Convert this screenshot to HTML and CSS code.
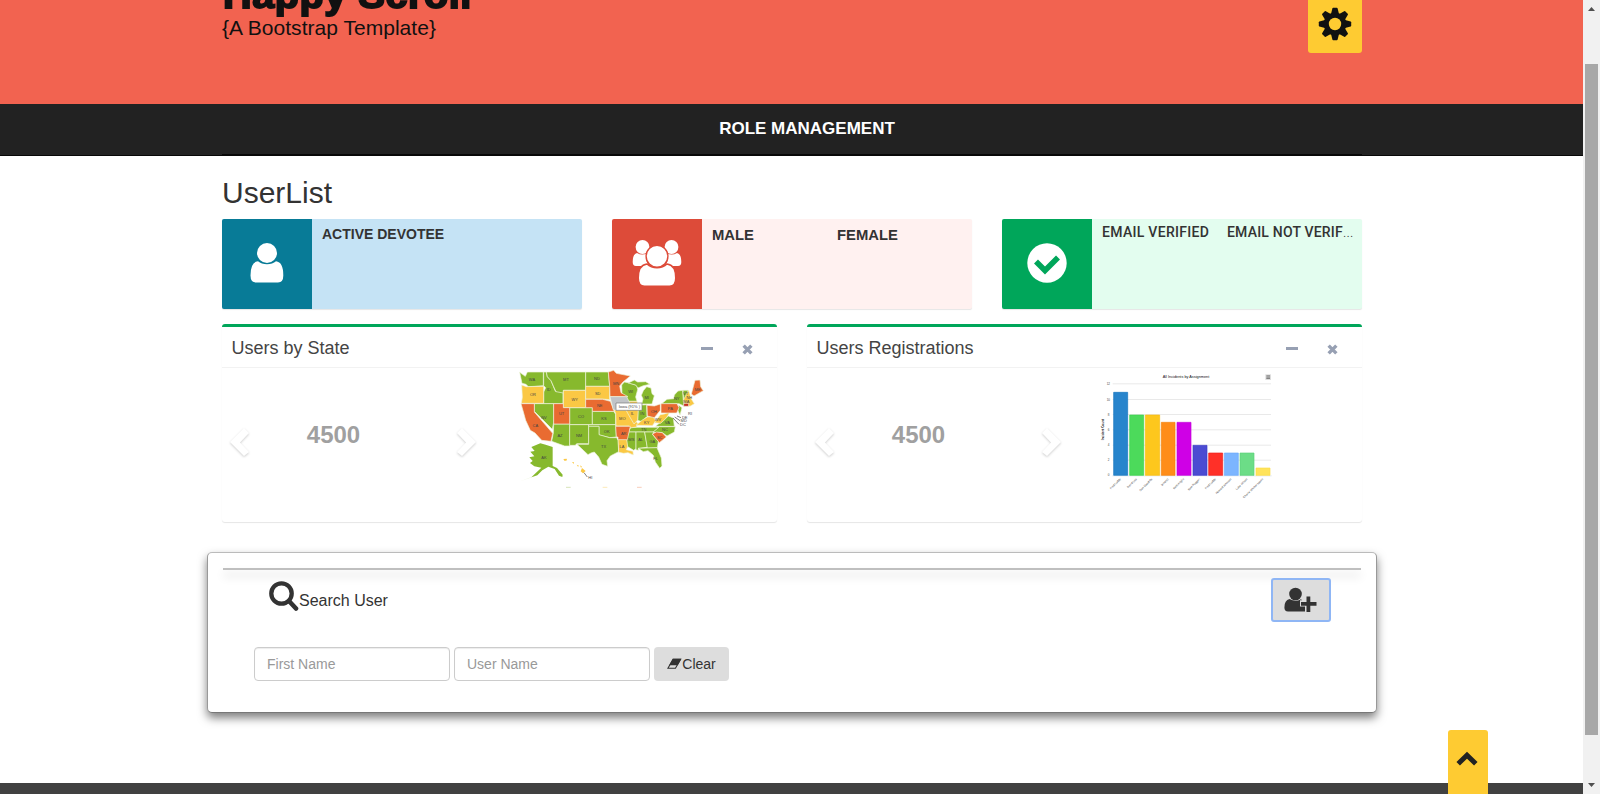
FILE: index.html
```
<!DOCTYPE html>
<html lang="en">
<head>
<meta charset="utf-8">
<title>Happy Scroll</title>
<link rel="stylesheet" href="styles.css">
</head>
<body>
<div class="page">
  <header class="masthead">
    <div class="container masthead-row">
      <div>
        <h1 class="brand">Happy Scroll</h1>
        <p class="tagline">{A Bootstrap Template}</p>
      </div>
      <button class="cog-btn" aria-label="Settings">
        <svg width="34" height="34" viewBox="-17 -17 34 34">
          <g fill="#111">
            <g id="teeth"><path d="M-4-10L-2.600-15.600Q-2.400-16.200-1.800-16.200H1.800Q2.400-16.200 2.600-15.600L4-10V10L2.600 15.600Q2.400 16.200 1.800 16.200H-1.800Q-2.400 16.200-2.600 15.600L-4 10Z"/></g>
            <use href="#teeth" transform="rotate(45)"/><use href="#teeth" transform="rotate(90)"/><use href="#teeth" transform="rotate(135)"/>
            <circle r="11.300"/>
          </g>
          <circle r="6.200" fill="#fecb32"/>
        </svg>
      </button>
    </div>
  </header>
  <nav class="navbar"><div class="container nav-inner"><div class="nav-line">ROLE MANAGEMENT</div></div></nav>

  <main class="container">
    <h2 class="title">UserList</h2>
    <div class="infos">
      <section class="info blue">
        <div class="info-icon"><svg width="34" height="42" viewBox="0 0 34 42" fill="#fff"><circle cx="17" cy="11" r="10"/><path d="M8 19.300Q11.500 22.300 17 22.300T26 19.300Q33.300 20 33.300 33.500 33.300 40.500 28 40.500H6Q.500 40.500 .500 33.500 .500 20 8 19.300Z"/></svg></div>
        <div class="info-body"><span>ACTIVE DEVOTEE</span></div>
      </section>
      <section class="info red">
        <div class="info-icon"><svg width="50" height="48" viewBox="0 0 50 48" fill="#fff"><circle cx="10.500" cy="8" r="6.900"/><circle cx="39.500" cy="8" r="6.900"/><path d="M5 14Q10 17 15 14.200 13.500 17.500 14.500 22 15.500 25 17 27H4Q.700 27 .700 23 .700 15 5 14ZM45 14Q40 17 35 14.200 36.500 17.500 35.500 22 34.500 25 33 27H46Q49.300 27 49.300 23 49.300 15 45 14Z"/><g stroke="#dd4b39" stroke-width="1.400"><path d="M15 25Q19 28.800 25 28.800T35 25Q43.700 26 43.700 39 43.700 47.200 37.500 47.200H12.500Q6.300 47.200 6.300 39 6.300 26 15 25Z"/><circle cx="25" cy="17.300" r="10.900"/></g></svg></div>
        <div class="info-body split"><span>MALE</span><span>FEMALE</span></div>
      </section>
      <section class="info green">
        <div class="info-icon"><svg width="40" height="40" viewBox="0 0 40 40"><circle cx="20" cy="20" r="19.700" fill="#fff"/><path d="M9 18.500L18 27.500 31 14.500" fill="none" stroke="#00a65a" stroke-width="5.600"/></svg></div>
        <div class="info-body split mail"><span>EMAIL VERIFIED</span><span class="clip">EMAIL NOT VERIF<i>...</i></span></div>
      </section>
    </div>

    <div class="panels">
      <section class="panel">
        <div class="panel-head"><h3>Users by State</h3><span class="tools"><i class="minus"></i><svg width="11" height="11" viewBox="0 0 10 10"><path d="M1.500 1.500L8.500 8.500M8.500 1.500L1.500 8.500" stroke="#97a0b3" stroke-width="3.100"/></svg></span></div>
        <div class="panel-body">
          <div class="slider">
            <svg class="arrow" width="22" height="30" viewBox="0 0 22 30"><path d="M15 0L20 5 11 14.500 20 24 15 28 1 14Z"/></svg>
            <strong>4500</strong>
            <svg class="arrow" width="22" height="30" viewBox="0 0 22 30"><path d="M6 0L1 5 10 14.500 1 24 6 28 20 14Z"/></svg>
          </div>
          <svg class="map" width="220" height="132" viewBox="0 24 660 396" stroke="#eef5dc" stroke-width="2" stroke-linejoin="round">
            <g fill="#87b92d">
              <path d="M59 37L76 49 82 36H130V77L104 79 85 80 78 73 66 70Z"/>
              <path d="M131 36H139L142 50 153 62 160 79 166 94 189 96V131H131V96L137 83 131 77Z"/>
              <path d="M139 36H257V91H190V99L168 95 160 78 153 62 142 50Z"/>
              <path d="M257 36H325L329 79H257Z"/>
              <path d="M103 131H161V187L157 208 103 154Z"/>
              <path d="M209 143H277V194H209Z"/>
              <path d="M277 154H341L347 163V194H277Z"/>
              <path d="M161 192H209V258H194L155 244 160 219Z"/>
              <path d="M209 194H266V251H230L226 256H209Z"/>
              <path d="M266 194H347L349 231 329 233 297 225V199H266Z"/>
              <path d="M266 199H297V224L329 233 350 233 355 242 356 275 331 288 321 302 323 319 306 313 296 291 283 276 273 279 264 284 250 271 231 253H266Z"/>
              <path d="M365 75L373 66 388 69 410 76 413 89 407 111 411 124H378L366 103Z"/>
              <path d="M385 69L403 60 413 66 437 65 450 73 430 77 414 84 407 75Z"/>
              <path d="M430 92L440 80 453 84 456 101 463 107 456 132H425L429 117 424 106Z"/>
              <path d="M414 136L440 134 441 169 426 185 413 181Z"/>
              <path d="M392 202H478L460 216H385Z"/>
              <path d="M478 200H526L523 216 501 228 487 218 459 217Z"/>
              <path d="M467 199L486 183 505 168 520 174 523 199Z"/>
              <path d="M386 216H408V266L401 271 381 259 379 238Z"/>
              <path d="M408 216H434L442 262 415 265 415 271 408 269Z"/>
              <path d="M434 216H461L458 224 475 244 472 263 442 264Z"/>
              <path d="M415 265L471 263 484 294 486 318 479 325 466 306 460 286 444 272 430 275Z"/>
              <path d="M484 132L501 118 521 116 523 105 534 93 548 91 550 124 554 139 537 131Z"/>
              <path d="M549 91H565L561 119H551Z"/><path d="M536 136L546 143 540 165 534 152Z"/>
              <path stroke="none" d="M121 250L137 254 158 261V318L171 324 188 344 187 351 177 347 164 327 145 320 127 331 112 346 60 364 94 352 124 323 103 319 90 309 98 303 88 292 103 289 91 275 104 273 94 261Z"/>
            </g>
            <g fill="#fbc844">
              <path d="M65 75L79 80 131 79V130H64L67 112Z"/><path d="M190 91H257V143H190Z"/>
              <path d="M257 79H329V119L307 117H257Z"/>
              <path d="M341 145L382 145 401 176 415 192 409 201 390 204 388 198H348L347 161Z"/>
              <path d="M379 124H411L415 145 413 180 402 192 386 165 377 148Z"/>
              <path d="M408 196L427 180 442 171 458 170 468 182 457 197Z"/><path d="M463 188L481 164 493 162 510 155 500 173 482 190Z"/>
              <path d="M354 238H380L383 260 379 269 399 274 400 285 384 278 371 280 356 277Z"/>
              <path d="M566 90L574 117 583 131 570 139 554 132 551 119Z"/>
              <path stroke="none" d="M190 297L200 296 201 301 194 303ZM216 306L222 307 221 312ZM230 314L237 317 234 320ZM240 316L246 320 243 323ZM246 324L257 333 249 340 242 334Z"/>
            </g>
            <g fill="#e96b31">
              <path d="M325 36L341 31 349 40 391 48 369 66 359 78 363 98 384 110H330L329 78Z"/>
              <path d="M63 131H103V156L158 220 153 244 125 241 105 219 91 211 77 181 71 159Z"/>
              <path d="M161 131H190V143H209V192H161Z"/><path d="M257 118L308 118 331 124 343 154H277V143H257Z"/>
              <path d="M347 199H391L382 239H354V231H349Z"/><path d="M441 136L463 138 481 132 481 151 463 173 442 168Z"/>
              <path d="M483 131H531L537 143 530 159H483Z"/><path d="M457 222L469 216 487 218 499 231 478 248Z"/>
              <path d="M574 102L585 61 600 60 602 80 610 92 582 108Z"/><path d="M551 130H566V139H551Z" fill="#c62f20"/>
            </g>
            <path fill="#c1c4c8" d="M330 110H380L389 128 380 150H340Z"/>
            <path fill="#fff" stroke="#777" d="M348 129H426V151H348Z"/>
            <g class="map-text">
              <text x="96" y="64">WA</text><text x="198" y="63">MT</text><text x="291" y="61">ND</text><text x="348" y="76">MN</text><text x="392" y="99">WI</text><text x="440" y="116">MI</text><text x="99" y="107">OR</text><text x="146" y="94">ID</text><text x="224" y="122">WY</text><text x="293" y="105">SD</text><text x="299" y="141">NE</text><text x="388" y="145">Iowa (91% )</text><text x="185" y="165">UT</text><text x="132" y="178">NV</text><text x="243" y="173">CO</text><text x="312" y="180">KS</text><text x="367" y="181">MO</text><text x="106" y="202">CA</text><text x="180" y="231">AZ</text><text x="237" y="231">NM</text><text x="320" y="219">OK</text><text x="371" y="224">AR</text><text x="311" y="264">TX</text><text x="366" y="263">LA</text><text x="394" y="244">MS</text><text x="422" y="244">AL</text><text x="457" y="248">GA</text><text x="479" y="238">SC</text><text x="495" y="214">NC</text><text x="431" y="213">TN</text><text x="502" y="192">VA</text><text x="440" y="192">KY</text><text x="474" y="183">WV</text><text x="462" y="160">OH</text><text x="427" y="165">IN</text><text x="397" y="164">IL</text><text x="511" y="150">PA</text><text x="530" y="120">NY</text><text x="593" y="93">ME</text><text x="557" y="105">VT</text><text x="568" y="118">NH</text><text x="559" y="130">MA</text><text x="570" y="164">RI</text><text x="554" y="176">DE</text><text x="551" y="185">MD</text><text x="549" y="199">DC</text><text x="467" y="300">FL</text><text x="132" y="297">AK</text><text x="271" y="356">HI</text>
            </g>
            <path stroke="#444" fill="none" d="M252 338L262 351M531 168L543 173M524 171L540 182M519 174L537 193"/>
            <g stroke-width="2"><path stroke="#c2d596" d="M198 382H212"/><path stroke="#fbdf95" d="M308 382H322"/><path stroke="#f4b39a" d="M411 382H425"/></g>
          </svg>
        </div>
      </section>

      <section class="panel">
        <div class="panel-head"><h3>Users Registrations</h3><span class="tools"><i class="minus"></i><svg width="11" height="11" viewBox="0 0 10 10"><path d="M1.500 1.500L8.500 8.500M8.500 1.500L1.500 8.500" stroke="#97a0b3" stroke-width="3.100"/></svg></span></div>
        <div class="panel-body">
          <div class="slider">
            <svg class="arrow" width="22" height="30" viewBox="0 0 22 30"><path d="M15 0L20 5 11 14.500 20 24 15 28 1 14Z"/></svg>
            <strong>4500</strong>
            <svg class="arrow" width="22" height="30" viewBox="0 0 22 30"><path d="M6 0L1 5 10 14.500 1 24 6 28 20 14Z"/></svg>
          </div>
          <svg class="chart" width="220" height="142" viewBox="0 24 660 426">
            <path d="M98 71.500H573M98 118.500H573M98 163.500H573M98 209.500H573M98 255.500H573M98 300.500H573" stroke="#e9e9e9" stroke-width="3"/>
            <path d="M97 347.500H575" stroke="#d3dcea" stroke-width="2"/>
            <g stroke-width="2">
              <path d="M101 97H143V346H101Z" fill="#2784cc" stroke="#1474bd"/>
              <path d="M149 165H191V346H149Z" fill="#4cda5b" stroke="#3bd14b"/>
              <path d="M196 165H239V346H196Z" fill="#fdc71d" stroke="#f7bd12"/>
              <path d="M244 187H285V346H244Z" fill="#ff8d19" stroke="#f3800a"/>
              <path d="M291 187H333V346H291Z" fill="#cf00e6" stroke="#c100d9"/>
              <path d="M339 256H381V346H339Z" fill="#4b4bd2" stroke="#3b3bc6"/>
              <path d="M386 279H428V346H386Z" fill="#ff3028" stroke="#ee201c"/>
              <path d="M433 279H475V346H433Z" fill="#7cb5ff" stroke="#6daaf8"/>
              <path d="M480 279H522V346H480Z" fill="#6cdd87" stroke="#5bd078"/>
              <path d="M528 324H570V346H528Z" fill="#ffe35b" stroke="#fbdc48"/>
            </g>
            <path fill="#ddd" d="M556 43H573V60H556Z"/><path d="M559 47.500H570M559 51.500H570M559 55.500H570" stroke="#555" stroke-width="2"/>
            <g class="chart-text">
              <text x="318" y="53" font-size="11.500" fill="#111">All Incidents by Assignment</text>
              <text x="85" y="76">12</text><text x="85" y="122">10</text><text x="86" y="167">8</text><text x="86" y="213">6</text><text x="86" y="259">4</text><text x="86" y="304">2</text><text x="86" y="349">0</text>
              <text transform="translate(72 209) rotate(-90)" font-weight="bold" fill="#111">Incident Count</text>
              <g text-anchor="end" font-size="8.500">
                <text transform="translate(123 358) rotate(-45)">Fred Luddy</text>
                <text transform="translate(171 358) rotate(-45)">David Loo</text>
                <text transform="translate(218 358) rotate(-45)">Don Goodliffe</text>
                <text transform="translate(266 358) rotate(-45)">(empty)</text>
                <text transform="translate(313 358) rotate(-45)">Beth Anglin</text>
                <text transform="translate(361 358) rotate(-45)">Bow Ruggeri</text>
                <text transform="translate(408 358) rotate(-45)">Fred Luddy</text>
                <text transform="translate(455 358) rotate(-45)">Howard Johnson</text>
                <text transform="translate(503 358) rotate(-45)">Luke Wilson</text>
                <text transform="translate(550 358) rotate(-45)">Charlie Whitherspoon</text>
              </g>
            </g>
          </svg>
        </div>
      </section>
    </div>
  </main>

  <section class="search">
    <div class="rule"></div>
    <div class="search-head">
      <div class="search-label">
        <svg width="30" height="31" viewBox="0 0 30 31" fill="none" stroke="#333"><circle cx="12.500" cy="12.500" r="10.200" stroke-width="4.300"/><path d="M20 20L27 27.500" stroke-width="4.600" stroke-linecap="round"/></svg><span>Search User</span>
      </div>
      <button class="add-btn" aria-label="Add user">
        <svg width="34" height="26" viewBox="0 0 34 26" fill="#333"><circle cx="11.500" cy="7" r="6.300"/><path d="M5.500 12Q11.500 15.500 17 12.200L18 13.200H16V19.500H21V24.500H4Q.400 24.500 .400 20.500 .400 13 5.500 12Z"/><path d="M17 15H22.500V9.500H26.300V15H32.500V18.800H26.300V25H22.500V18.800H17Z"/></svg>
      </button>
    </div>
    <div class="fields">
      <input placeholder="First Name"><input placeholder="User Name">
      <button class="clear-btn"><svg width="15" height="12" viewBox="0 0 16 12"><path d="M6.500 1H14.500L9 10.500H1Z" fill="none" stroke="#333" stroke-width="1.200"/><path d="M6.200 .500H15.300L11.500 7.300H2.300Z" fill="#333"/></svg>Clear</button>
    </div>
  </section>
</div>
<footer class="footer"></footer>
<button class="to-top" aria-label="Back to top"><svg width="22" height="16" viewBox="0 0 22 16"><path d="M2.200 12.800L11 4.200 19.800 12.800" fill="none" stroke="#222" stroke-width="5"/></svg></button>
<div class="scrollbar"><svg width="7" height="4" viewBox="0 0 7 4"><path d="M0 4L3.500 0 7 4Z" fill="#505050"/></svg><div class="thumb"></div><svg class="down" width="7" height="4" viewBox="0 0 7 4"><path d="M0 0L3.500 4 7 0Z" fill="#505050"/></svg></div>
</body>
</html>
```
FILE: styles.css
```
* { box-sizing: border-box; }
html, body { height: 100%; }
body { margin: 0; height: 794px; overflow: hidden; padding-right: 17px; background: #fff; color: #333; font: 14px/20px "Liberation Sans", Arial, sans-serif; }
button { border: 0; margin: 0; padding: 0; font: inherit; color: inherit; }
h1, h2, h3, p { margin: 0; font-weight: normal; }
svg { display: block; flex: none; }
.page { height: 783px; }
.container { width: 1140px; margin: 0 auto 0 222px; }
.masthead { height: 104px; background: #f26350; overflow: hidden; color: #111; }
.masthead-row { display: flex; justify-content: space-between; align-items: flex-start; }
.brand { margin-top: -24px; padding-left: 1px; font-size: 36px; line-height: 40px; font-weight: 900; white-space: nowrap; letter-spacing: .5px; -webkit-text-stroke: 1.800px #111; transform: scaleX(1.1); transform-origin: left; }
.tagline { font-size: 21px; line-height: 24px; letter-spacing: .03px; }
.cog-btn { width: 54px; height: 53px; background: #fecb32; border-radius: 0 0 3px 3px; display: flex; justify-content: center; padding-top: 7px; }
.navbar { height: 52px; background: #222; border-bottom: 1px solid #080808; }
.nav-line { height: 51px; border-bottom: 1px solid #080808; padding: 15px 0 0 30px; text-align: center; color: #fff; font-weight: bold; font-size: 17px; }
.title { padding-top: 20px; height: 63px; font-size: 30px; line-height: 33px; }
.infos { display: grid; grid-template-columns: repeat(3, 360px); gap: 30px; }
.info { display: flex; height: 90px; border-radius: 2px; overflow: hidden; box-shadow: 0 1px 1px rgba(0,0,0,.1); font-weight: bold; }
.info-icon { width: 90px; flex: none; display: flex; align-items: center; justify-content: center; padding: 0 1px 2px 0; }
.info-body { flex: 1; padding: 5px 10px; min-width: 0; }
.blue { background: #c5e3f5; }
.blue .info-icon { background: #087b97; }
.red { background: #fff1f0; font-size: 14.800px; }
.red .info-icon { background: #dd4b39; }
.green { background: #e3fdef; }
.green .info-icon { background: #00a65a; }
.split { display: grid; grid-template-columns: 125px 125px; padding: 6px 0 0 10px; }
.mail { padding-top: 3px; font: 500 14px/20px Roboto, sans-serif; letter-spacing: .3px; white-space: nowrap; }
.clip { letter-spacing: .2px; }
.clip i { font-style: normal; font-weight: 300; }
.panels { display: grid; grid-template-columns: 555px 555px; gap: 30px; padding-top: 15px; }
.panel { height: 198px; border-top: 3px solid #00a65a; border-radius: 3px; background: #fff; box-shadow: 0 1px 1px rgba(0,0,0,.1); }
.panel-head { height: 41px; border-bottom: 1px solid #f2f2f2; display: flex; justify-content: space-between; padding: 11px 24px 0 9.500px; color: #444; }
.panel-head h3 { font-size: 18px; line-height: 20px; }
.tools { display: flex; gap: 29px; padding-top: 6px; }
.minus { width: 12px; height: 3px; margin-top: 3px; background: #97a0b3; }
.panel-body { display: flex; }
.slider { width: 249px; margin: 60px 22px 0 7px; display: flex; justify-content: space-between; color: #a0a0a0; }
.slider strong { font-size: 24px; line-height: 28px; margin: -7px 40px 0 0; }
.arrow { fill: #fff; filter: drop-shadow(0 1px 1px rgba(0,0,0,.2)); }
.map-text, .chart-text { font-family: "Liberation Sans", Arial, sans-serif; text-anchor: middle; stroke: none; fill: #444; font-size: 12px; }
.chart-text { font-size: 9px; }
.chart { margin-left: -5px; }
.search { width: 1170px; height: 161px; margin: 30px 0 0 207px; border: 1px solid #999; border-color: #bbb #999 #777 #999; border-radius: 5px; background: #fff; box-shadow: 0 5px 10px rgba(0,0,0,.5); padding: 15px 15px 0; }
.rule { height: 2px; background: #bfbfbf; box-shadow: 0 6px 10px rgba(0,0,0,.2); }
.search-head { display: flex; justify-content: space-between; padding: 8px 30px 0 46px; }
.search-label { display: flex; font-size: 16px; padding-top: 3px; }
.search-label span { padding-top: 10px; }
.add-btn { width: 60px; height: 44px; background: #ddd; border: 2px solid #8fb6f5; border-radius: 3px; display: flex; align-items: center; justify-content: center; }
.fields { display: flex; gap: 4px; padding: 25px 0 0 31px; }
.fields input { width: 196px; height: 34px; border: 1px solid #ccc; border-radius: 4px; padding: 6px 12px; font: inherit; background: #fff; box-shadow: inset 0 1px 1px rgba(0,0,0,.075); }
.fields input::placeholder { color: #999; opacity: 1; }
.clear-btn { width: 75px; height: 34px; background: #ddd; border-radius: 4px; display: flex; align-items: center; justify-content: center; }
.footer { height: 11px; background: #414141; }
.to-top { position: fixed; left: 1448px; bottom: 0; width: 40px; height: 64px; background: #fecb32; border-radius: 3px 3px 0 0; display: flex; justify-content: center; padding: 21px 2px 0 0; }
.scrollbar { position: fixed; top: 0; right: 0; width: 17px; height: 794px; background: #f1f1f1; display: flex; flex-direction: column; align-items: center; padding: 7px 0; }
.thumb { width: 13px; height: 671px; margin-top: 53px; background: #a8a8a8; }
.down { margin-top: auto; }
```
